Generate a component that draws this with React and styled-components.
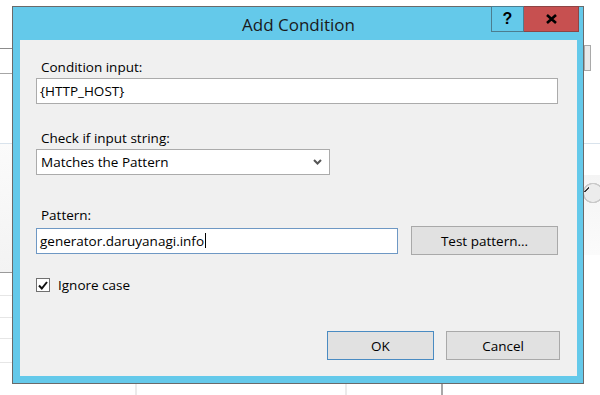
import React from 'react';
import styled, { createGlobalStyle } from 'styled-components';

const Global = createGlobalStyle`
  html, body { margin: 0; padding: 0; }
  body {
    width: 600px;
    height: 395px;
    overflow: hidden;
    background: #fff;
    font-family: "Open Sans", "Noto Sans", "DejaVu Sans", sans-serif;
    color: #000;
  }
`;

const line = (color, x, y, w, h) =>
  `linear-gradient(${color}, ${color}) ${x}px ${y}px / ${w}px ${h}px no-repeat`;

const Desktop = styled.div`
  width: 600px;
  height: 395px;
  box-sizing: border-box;
  padding: 6px 0 0 12px;
  background:
    linear-gradient(135deg, transparent 0 45%, #3a3a3a 45% 60%, transparent 60%) 584px 187px / 5px 5px no-repeat,
    radial-gradient(circle at 593px 193px, #ececec 0 8.5px, #c9c9c9 9px 10px, transparent 10.5px) 0 0 / 600px 395px no-repeat,
    ${line('#e9e9e9', 585, 46, 5, 24)},
    ${line('#a9a9a9', 584, 45, 7, 26)},
    ${line('#d9e3ec', 584, 143, 16, 1)},
    linear-gradient(#f4f4f4, #fbfbfb) 584px 175px / 16px 80px no-repeat,
    ${line('#8c8c8c', 0, 48, 12, 1)},
    ${line('#a6a6a6', 0, 73, 12, 1)},
    ${line('#d9e3ec', 0, 143, 12, 1)},
    linear-gradient(#fbfbfb, #f3f3f3) 0 144px / 12px 128px no-repeat,
    ${line('#9a9a9a', 0, 272, 12, 1)},
    ${line('#e6e6e6', 0, 295, 12, 1)},
    ${line('#e6e6e6', 0, 317, 12, 1)},
    ${line('#e6e6e6', 0, 338, 12, 1)},
    ${line('#e6e6e6', 0, 362, 12, 1)},
    ${line('#ebebeb', 135, 384, 2, 11)},
    ${line('#ebebeb', 345, 384, 2, 11)},
    ${line('#a8a8a8', 441, 384, 2, 11)},
    #fff;
`;

const Window = styled.div`
  width: 572px;
  height: 378px;
  box-sizing: border-box;
  border: 1px solid #6a6a6a;
  background: #64c9ea;
  padding: 0 6px 7px 7px;
  display: flex;
  flex-direction: column;
`;

const TitleBar = styled.div`
  height: 33px;
  flex: none;
  display: grid;
  grid-template-columns: 1fr auto 1fr;
  align-items: start;
  margin: 0 -7px 0 -7px;
`;

const Title = styled.div`
  grid-column: 2;
  font-size: 17px;
  line-height: 33px;
  color: #1a1a1a;
  white-space: nowrap;
  padding-top: 1px;
`;

const Caption = styled.div`
  grid-column: 3;
  justify-self: end;
  display: flex;
  margin-top: -1px;
  margin-right: 5px;
`;

const CaptionButton = styled.div`
  box-sizing: border-box;
  height: 26px;
  width: ${p => p.$w}px;
  display: flex;
  align-items: center;
  justify-content: center;
  background: ${p => (p.$close ? '#c75050' : '#64c9ea')};
  border: 1px solid ${p => (p.$close ? '#8e4444' : '#4c7d90')};
  border-left-width: ${p => (p.$close ? 0 : 1)}px;
  font-family: "Liberation Sans", Arial, sans-serif;
  font-weight: 700;
  font-size: 16px;
  color: #000;
`;

const Client = styled.div`
  flex: 1;
  background: #f0f0f0;
  box-sizing: border-box;
  padding: 19px 19px 16px 16px;
  display: flex;
  flex-direction: column;
  font-size: 13.5px;
`;

const Label = styled.div`
  line-height: 16px;
  margin: ${p => p.$top || 0}px 0 3px 5px;
  white-space: nowrap;
`;

const TextBox = styled.div`
  box-sizing: border-box;
  height: 26px;
  width: ${p => (p.$w ? `${p.$w}px` : 'auto')};
  background: #fff;
  border: 1px solid ${p => (p.$focus ? '#6e98c4' : '#ababab')};
  display: flex;
  align-items: center;
  padding-left: 3px;
  white-space: nowrap;
`;

const Caret = styled.span`
  display: inline-block;
  width: 1px;
  height: 15px;
  background: #000;
  margin-left: 1px;
`;

const Select = styled.div`
  box-sizing: border-box;
  height: 26px;
  width: 294px;
  background: #fff;
  border: 1px solid #ababab;
  display: flex;
  align-items: center;
  justify-content: space-between;
  padding: 0 7px 0 4px;
`;

const Row = styled.div`
  display: flex;
  align-items: center;
  gap: ${p => p.$gap || 0}px;
  margin-top: ${p => p.$top || 0}px;
  line-height: 14px;
`;

const Button = styled.div`
  box-sizing: border-box;
  height: 29px;
  width: ${p => p.$w}px;
  background: #e1e1e1;
  border: 1px solid ${p => (p.$default ? '#4a8bc2' : '#a9a9a9')};
  display: flex;
  align-items: center;
  justify-content: center;
  white-space: nowrap;
`;

const Check = styled.div`
  box-sizing: border-box;
  width: 14px;
  height: 14px;
  background: #fff;
  border: 1px solid #707070;
  display: flex;
  align-items: center;
  justify-content: center;
`;

const Footer = styled.div`
  margin-top: auto;
  display: flex;
  justify-content: flex-end;
  gap: 12px;
  margin-right: -2px;
`;

export default function App() {
  return (
    <>
      <Global />
      <Desktop>
        <Window>
          <TitleBar>
            <Title>Add Condition</Title>
            <Caption>
              <CaptionButton $w={33}>?</CaptionButton>
              <CaptionButton $w={55} $close>
                <svg width="11" height="10" viewBox="0 0 11 10">
                  <path d="M1 1 L10 9 M10 1 L1 9" stroke="#000" strokeWidth="2.6" />
                </svg>
              </CaptionButton>
            </Caption>
          </TitleBar>
          <Client>
            <Label>Condition input:</Label>
            <TextBox>{'{HTTP_HOST}'}</TextBox>

            <Label $top={26}>Check if input string:</Label>
            <Select>
              <span>Matches the Pattern</span>
              <svg width="9" height="6" viewBox="0 0 9 6">
                <path d="M1 1 L4.5 4.5 L8 1" fill="none" stroke="#555" strokeWidth="2" />
              </svg>
            </Select>

            <Label $top={32}>Pattern:</Label>
            <Row $gap={13}>
              <TextBox $w={362} $focus>
                generator.daruyanagi.info<Caret />
              </TextBox>
              <Button $w={147}>Test pattern...</Button>
            </Row>

            <Row $gap={8} $top={23}>
              <Check>
                <svg width="10" height="9" viewBox="0 0 10 9">
                  <path d="M1 4.5 L3.8 7.5 L9 1" fill="none" stroke="#111" strokeWidth="2" />
                </svg>
              </Check>
              <span>Ignore case</span>
            </Row>

            <Footer>
              <Button $w={107} $default>OK</Button>
              <Button $w={114}>Cancel</Button>
            </Footer>
          </Client>
        </Window>
      </Desktop>
    </>
  );
}
